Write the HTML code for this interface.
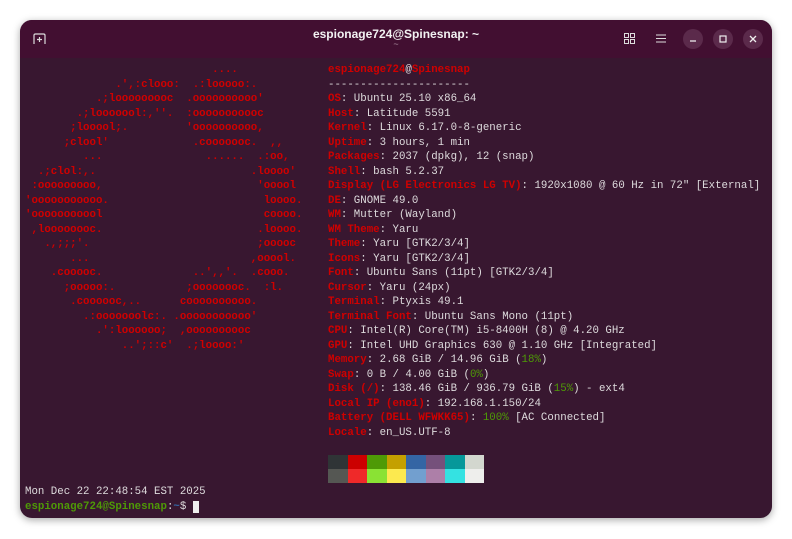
<!DOCTYPE html>
<html><head><meta charset="utf-8"><style>
body{margin:0;width:792px;height:539px;background:#fff;overflow:hidden;position:relative;font-family:"Liberation Sans",sans-serif}
.win{position:absolute;left:20px;top:20px;width:752px;height:498px;border-radius:12px;background:#381730;box-shadow:0 2px 8px rgba(0,0,0,.35);overflow:hidden}
.hdr{position:absolute;left:0;top:0;width:752px;height:38px;background:#420f31}
.title{position:absolute;left:0;width:752px;top:7px;text-align:center;color:#f2f2f2;font-weight:bold;font-size:12px}
.sub{position:absolute;left:0;width:752px;top:19px;text-align:center;color:#a88a9c;font-size:9px}
.cb{position:absolute;top:9px;width:20px;height:20px;border-radius:50%;background:#5b2a4b}
pre{margin:0;position:absolute;font-family:"Liberation Mono",monospace;font-size:10.75px;line-height:14.52px;color:#dedbdd}
.r{color:#d00000;font-weight:bold}.g{color:#4e9a06}
.pal{position:absolute;left:308px;top:435px;display:grid;grid-template-columns:repeat(8,19.5px);grid-template-rows:14px 14px}
</style></head><body>
<div class="win">
<div class="hdr">
<svg style="position:absolute;left:13px;top:13px" width="13" height="12" viewBox="0 0 13 12"><path d="M1 11V2.5Q1 1 2.5 1h8Q12 1 12 2.5V11" fill="none" stroke="#ddd" stroke-width="1.2"/><path d="M6.5 4v5M4 6.5h5" stroke="#ddd" stroke-width="1.2"/></svg>
<div class="title">espionage724@Spinesnap: ~</div>
<div class="sub">~</div>
<svg style="position:absolute;left:604px;top:13px" width="11" height="11"><rect x="0.5" y="0.5" width="4" height="4" fill="none" stroke="#ddd"/><rect x="6.5" y="0.5" width="4" height="4" fill="none" stroke="#ddd"/><rect x="0.5" y="6.5" width="4" height="4" fill="none" stroke="#ddd"/><rect x="6.5" y="6.5" width="4" height="4" fill="none" stroke="#ddd"/></svg>
<svg style="position:absolute;left:636px;top:14px" width="10" height="9"><path d="M0 1h10M0 4.5h10M0 8h10" stroke="#ddd"/></svg>
<div class="cb" style="left:663px"><svg width="20" height="20"><path d="M7 12h6" stroke="#eee" stroke-width="1.2"/></svg></div>
<div class="cb" style="left:693px"><svg width="20" height="20"><rect x="7" y="7" width="6" height="6" fill="none" stroke="#eee" stroke-width="1.2"/></svg></div>
<div class="cb" style="left:723px"><svg width="20" height="20"><path d="M7 7l6 6M13 7l-6 6" stroke="#eee" stroke-width="1.3"/></svg></div>
</div>
<pre class="r" style="left:5px;top:43px">                             ....
              .',:clooo:  .:looooo:.
           .;looooooooc  .oooooooooo'
        .;looooool:,''.  :ooooooooooc
       ;looool;.         'oooooooooo,
      ;clool'             .cooooooc.  ,,
         ...                ......  .:oo,
  .;clol:,.                        .loooo'
 :ooooooooo,                        'ooool
'ooooooooooo.                        loooo.
'ooooooooool                         coooo.
 ,loooooooc.                        .loooo.
   .,;;;'.                          ;ooooc
       ...                         ,ooool.
    .cooooc.              ..',,'.  .cooo.
      ;ooooo:.           ;oooooooc.  :l.
       .coooooc,..      coooooooooo.
         .:ooooooolc:. .ooooooooooo'
           .':loooooo;  ,oooooooooc
               ..';::c'  .;loooo:'</pre>
<pre style="left:308px;top:43px"><span class="r">espionage724</span>@<span class="r">Spinesnap</span>
----------------------
<span class="r">OS</span>: Ubuntu 25.10 x86_64
<span class="r">Host</span>: Latitude 5591
<span class="r">Kernel</span>: Linux 6.17.0-8-generic
<span class="r">Uptime</span>: 3 hours, 1 min
<span class="r">Packages</span>: 2037 (dpkg), 12 (snap)
<span class="r">Shell</span>: bash 5.2.37
<span class="r">Display (LG Electronics LG TV)</span>: 1920x1080 @ 60 Hz in 72" [External]
<span class="r">DE</span>: GNOME 49.0
<span class="r">WM</span>: Mutter (Wayland)
<span class="r">WM Theme</span>: Yaru
<span class="r">Theme</span>: Yaru [GTK2/3/4]
<span class="r">Icons</span>: Yaru [GTK2/3/4]
<span class="r">Font</span>: Ubuntu Sans (11pt) [GTK2/3/4]
<span class="r">Cursor</span>: Yaru (24px)
<span class="r">Terminal</span>: Ptyxis 49.1
<span class="r">Terminal Font</span>: Ubuntu Sans Mono (11pt)
<span class="r">CPU</span>: Intel(R) Core(TM) i5-8400H (8) @ 4.20 GHz
<span class="r">GPU</span>: Intel UHD Graphics 630 @ 1.10 GHz [Integrated]
<span class="r">Memory</span>: 2.68 GiB / 14.96 GiB (<span class="g">18%</span>)
<span class="r">Swap</span>: 0 B / 4.00 GiB (<span class="g">0%</span>)
<span class="r">Disk (/)</span>: 138.46 GiB / 936.79 GiB (<span class="g">15%</span>) - ext4
<span class="r">Local IP (eno1)</span>: 192.168.1.150/24
<span class="r">Battery (DELL WFWKK65)</span>: <span class="g">100%</span> [AC Connected]
<span class="r">Locale</span>: en_US.UTF-8</pre>
<div class="pal">
<i style="background:#2f3436"></i><i style="background:#cc0000"></i><i style="background:#4e9a06"></i><i style="background:#c4a000"></i><i style="background:#3465a4"></i><i style="background:#75507b"></i><i style="background:#06989a"></i><i style="background:#d3d7cf"></i>
<i style="background:#555753"></i><i style="background:#ef2929"></i><i style="background:#8ae234"></i><i style="background:#fce94f"></i><i style="background:#729fcf"></i><i style="background:#ad7fa8"></i><i style="background:#34e2e2"></i><i style="background:#eeeeec"></i>
</div>
<pre style="left:5px;top:465px">Mon Dec 22 22:48:54 EST 2025
<b class="g">espionage724@Spinesnap</b>:<b style="color:#3465a4">~</b>$ <span style="background:#eee">&nbsp;</span></pre>
</div>
</body></html>
